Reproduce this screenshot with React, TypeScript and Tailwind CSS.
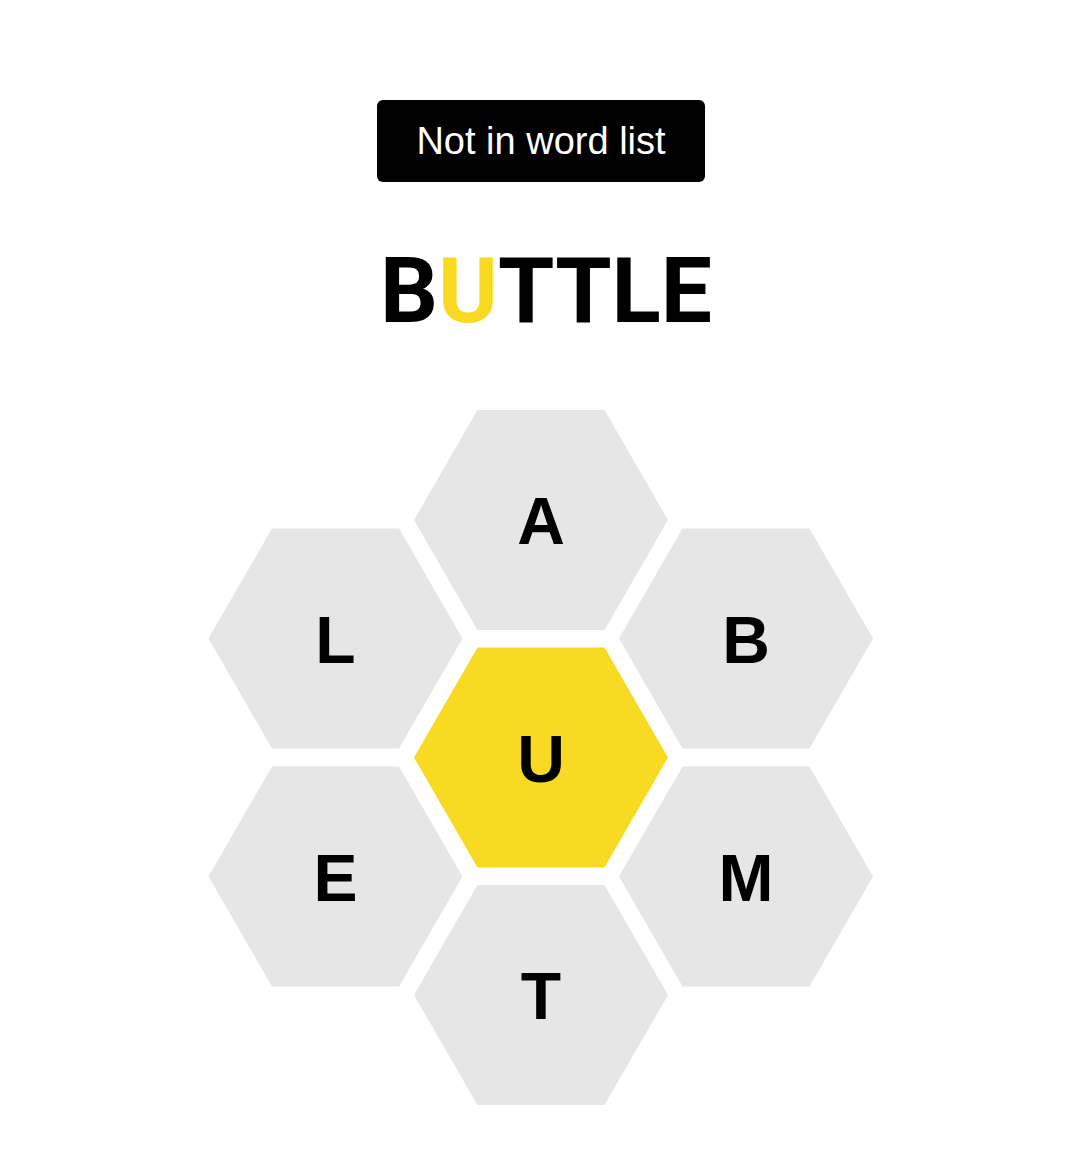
type Cell = { letter: string; x: number; y: number; center?: boolean };

// hex radius (center to corner) of a flat-topped cell
const R = 127;
const H = 110;

const cells: Cell[] = [
  { letter: 'A', x: 341, y: 120 },
  { letter: 'L', x: 135.5, y: 238.5 },
  { letter: 'B', x: 546, y: 238.5 },
  { letter: 'U', x: 341, y: 357.5, center: true },
  { letter: 'E', x: 135.5, y: 476.5 },
  { letter: 'M', x: 546, y: 476.5 },
  { letter: 'T', x: 341, y: 595 },
];

function hexPoints(cx: number, cy: number) {
  return [
    [cx - R, cy],
    [cx - R / 2, cy - H],
    [cx + R / 2, cy - H],
    [cx + R, cy],
    [cx + R / 2, cy + H],
    [cx - R / 2, cy + H],
  ]
    .map((p) => p.join(','))
    .join(' ');
}

function Hive() {
  return (
    <svg width={680} height={710} viewBox="0 0 680 710" className="block">
      {cells.map((c) => (
        <g key={c.letter}>
          <polygon points={hexPoints(c.x, c.y)} fill={c.center ? '#f7da21' : '#e6e6e6'} />
          <text
            x={c.x}
            y={c.y + 24}
            textAnchor="middle"
            fontFamily="'Liberation Sans', Arial, sans-serif"
            fontWeight={700}
            fontSize={66}
            fill="#000"
          >
            {c.letter}
          </text>
        </g>
      ))}
    </svg>
  );
}

export default function App() {
  const word = 'BUTTLE';
  return (
    <div className="min-h-[1163px] w-full bg-white flex flex-col items-center pt-[100px] font-['Liberation_Sans',Arial,sans-serif]">
      {/* toast */}
      <div className="ml-[2px] h-[82px] w-[328px] rounded-[6px] bg-black text-white flex items-center justify-center text-[38px] leading-none">
        Not in word list
      </div>

      {/* current guess */}
      <div className="mt-[64px] h-[90px] text-[91px] leading-none font-bold text-black font-['Roboto',Arial,sans-serif] pl-[12px]">
        {word.split('').map((ch, i) => (
          <span key={i} className={ch === 'U' ? 'text-[#f7da21]' : ''}>
            {ch}
          </span>
        ))}
      </div>

      <div className="mt-[64px]">
        <Hive />
      </div>
    </div>
  );
}
